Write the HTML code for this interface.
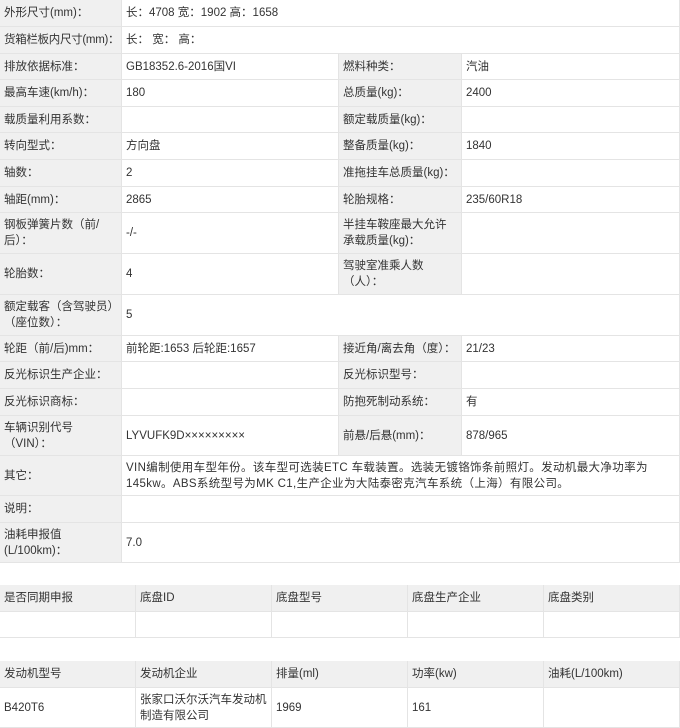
<!DOCTYPE html><html><head><meta charset="utf-8"><style>
body{margin:0;width:680px;height:727px;background:#fff;font-family:"Liberation Sans","Noto Sans CJK SC",sans-serif;font-size:11.5px;color:#333;position:relative;overflow:hidden}
.c{position:absolute;box-sizing:border-box;display:flex;align-items:center;padding:0 4px;line-height:16px;border-right:1px solid #e4e4e4;border-bottom:1px solid #e4e4e4}
.g{background:#f0f0f0}
.n{white-space:nowrap;letter-spacing:-0.3px}
</style></head><body>
<script>
const rows=[
[0,27,"外形尺寸(mm)：","长：4708 宽：1902 高：1658"],
[27,54,"<span class='n'>货箱栏板内尺寸(mm)：</span>","长： 宽： 高："],
[54,80,"排放依据标准：","GB18352.6-2016国VI","燃料种类：","汽油"],
[80,107,"最高车速(km/h)：","180","总质量(kg)：","2400"],
[107,133,"载质量利用系数：","","额定载质量(kg)：",""],
[133,160,"转向型式：","方向盘","整备质量(kg)：","1840"],
[160,187,"轴数：","2","准拖挂车总质量(kg)：",""],
[187,213,"轴距(mm)：","2865","轮胎规格：","235/60R18"],
[213,254,"钢板弹簧片数（前/后）：","-/-","半挂车鞍座最大允许承载质量(kg)：",""],
[254,295,"轮胎数：","4","驾驶室准乘人数（人）：",""],
[295,336,"额定载客（含驾驶员）（座位数）：","5"],
[336,362,"轮距（前/后)mm：","前轮距:1653 后轮距:1657","接近角/离去角（度）：","21/23"],
[362,389,"反光标识生产企业：","","反光标识型号：",""],
[389,416,"反光标识商标：","","防抱死制动系统：","有"],
[416,456,"车辆识别代号（VIN）：","LYVUFK9D×××××××××","前悬/后悬(mm)：","878/965"],
[456,496,"其它：","<span style='letter-spacing:0.35px'>VIN编制使用车型年份。该车型可选装ETC 车载装置。选装无镀铬饰条前照灯。发动机最大净功率为145kw。ABS系统型号为MK C1,生产企业为大陆泰密克汽车系统（上海）有限公司。</span>"],
[496,523,"说明：",""],
[523,563,"油耗申报值(L/100km)：","7.0"]];
let h="";
function cell(x,y,w,hh,t,g){h+=`<div class="c${g?' g':''}" style="left:${x}px;top:${y}px;width:${w}px;height:${hh}px">${t}</div>`;}
for(const r of rows){const H=r[1]-r[0];
cell(0,r[0],122,H,r[2],1);
if(r.length>4){cell(122,r[0],217,H,r[3]);cell(339,r[0],123,H,r[4],1);cell(462,r[0],218,H,r[5]);}
else cell(122,r[0],558,H,r[3]);}
const xs=[0,136,272,408,544,680];
const t2=["是否同期申报","底盘ID","底盘型号","底盘生产企业","底盘类别"];
const t3=["发动机型号","发动机企业","排量(ml)","功率(kw)","油耗(L/100km)"];
const v3=["B420T6","张家口沃尔沃汽车发动机制造有限公司","1969","161",""];
for(let i=0;i<5;i++){const w=xs[i+1]-xs[i];
cell(xs[i],585,w,27,t2[i],1);cell(xs[i],612,w,26,"");
cell(xs[i],661,w,27,t3[i],1);cell(xs[i],688,w,40,v3[i]);}
document.write(h);
</script>
</body></html>
